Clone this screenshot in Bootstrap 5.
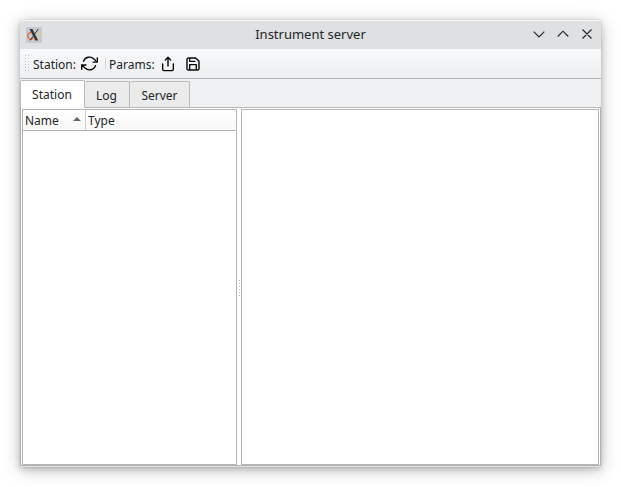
<!DOCTYPE html>
<html lang="en">
<head>
<meta charset="utf-8">
<title>Instrument server</title>
<link href="https://cdn.jsdelivr.net/npm/bootstrap@5.3.0/dist/css/bootstrap.min.css" rel="stylesheet">
<style>
body{font:12px/16px "Noto Sans",sans-serif;color:#232629;background:#fff;height:487px;padding:20px;overflow:hidden}
svg{display:block;flex:none}
.app-window{width:581px;height:447px;background:#e2e3e4;border-radius:2px 2px 0 0;box-shadow:0 0 1px rgba(0,0,0,.3),0 2px 6px rgba(0,0,0,.2),0 3px 18px rgba(0,0,0,.22)}
.titlebar{height:29px;background:#dee0e2;border-top:1px solid #f4f5f5;border-radius:2px 2px 0 0;padding:0 8px 1px 6px}
.caption{font-size:13px;line-height:17px;padding-left:2px}
.side-slot{width:68px}
.window-buttons{padding-bottom:2px}
.tools{height:30px;background:linear-gradient(#f8f9fb,#eeeff1);border-bottom:1px solid #b3b5b6;padding-left:5px}
.tools .label{padding-top:2px}
.grip{width:5px;height:17px;margin-right:3px;background:radial-gradient(circle at .5px .5px,#bdbfc1 .7px,transparent .8px) 0 0/3px 3px}
.tool-sep{width:1px;height:12px;background:#d3d5d6;margin:0 3px 0 7px}
.refresh{margin-left:5px}
.share{margin-left:5px}
.save{margin-left:9px}
.tabs{height:29px;background:#eff0f1;border-bottom:1px solid #b5b7b8}
.tab{height:26px;background:#ebebeb;border:1px solid #b9bbbc;border-left-width:0;border-bottom:0;border-radius:2px 2px 0 0;padding-top:2px}
.tab.current{height:28px;width:65px;background:#fff;border-left-width:1px;margin-bottom:-1px;padding:1px 1px 0 0}
.tab-log{width:45px;padding-right:1px}
.tab-server{width:60px}
.pane{height:358px;background:#fff;border:1px solid #b0b2b3;border-top:0;padding:1px 1px 0 1px}
.frame{border:1px solid #b4b6b6;background:#fff}
.tree{width:215px}
.tree-head{height:21px;background:linear-gradient(#fff,#f8f8f8);border-bottom:1px solid #b0b2b3}
.tree-head span{padding-top:2px}
.col-name{width:63px;border-right:1px solid #ccc;padding:0 4px 0 2px}
.col-name svg{margin-bottom:2px}
.col-type{padding-left:2px}
.splitter{width:4px;padding-top:2px}
.splitter i{width:1px;height:17px;margin-left:2px;background:repeating-linear-gradient(#b4b6b7 0 1px,transparent 1px 3px)}
</style>
<script src="https://cdn.jsdelivr.net/npm/bootstrap@5.3.0/dist/js/bootstrap.bundle.min.js"></script>
</head>
<body>
<main class="app-window d-flex flex-column">
  <header class="titlebar d-flex align-items-center justify-content-between">
    <div class="side-slot">
      <svg width="16" height="16" viewBox="0 0 16 16"><path fill="#c4cbd0" d="M0 0h16v16H0z"/><path d="M9 5.300c3.800-1.300 6.200.7 5.300 3.500-.6 1.900-2.300 3-4.300 2.900" fill="none" stroke="#e6c49d" stroke-width="1.300"/><path d="M5.500 4.900C1.200 6 .7 10 3 11.700c1.700 1 3.500.5 4.500-.7" fill="none" stroke="#e57042" stroke-width="1.500"/><path d="M3.500 2h3l5.700 11.500H9.400z" fill="#30363a"/><path d="M12.300 2 4 13.500" stroke="#30363a"/></svg>
    </div>
    <span class="caption">Instrument server</span>
    <div class="side-slot window-buttons d-flex justify-content-end">
      <svg width="60" height="14" viewBox="0 0 60 14" fill="none" stroke="#232629" stroke-width="1.150"><path d="m.7 4.700 5.300 5.300 5.300-5.300M24.700 9.500l5.300-5.300 5.300 5.300M49.500 2.500l9 9m0-9-9 9"/></svg>
    </div>
  </header>
  <div class="tools d-flex align-items-center">
    <span class="grip"></span><span class="label">Station:</span>
    <svg class="refresh" width="17" height="17" viewBox="0 0 24 24" fill="none" stroke="#090909" stroke-width="2" stroke-linecap="round" stroke-linejoin="round"><path d="M23 4v6h-6M1 20v-6h6M3.510 9a9 9 0 0 1 14.850-3.360L23 10M1 14l4.640 4.360A9 9 0 0 0 20.490 15"/></svg>
    <span class="tool-sep"></span><span class="label">Params:</span>
    <svg class="share" width="16" height="16" viewBox="0 0 24 24" fill="none" stroke="#090909" stroke-width="2.100" stroke-linecap="round" stroke-linejoin="round"><path d="M4 12v8a2 2 0 0 0 2 2h12a2 2 0 0 0 2-2v-8M16 6l-4-4-4 4M12 2v13"/></svg>
    <svg class="save" width="16" height="16" viewBox="0 0 24 24" fill="none" stroke="#090909" stroke-width="2.100" stroke-linecap="round" stroke-linejoin="round"><path d="M19 21H5a2 2 0 0 1-2-2V5a2 2 0 0 1 2-2h11l5 5v11a2 2 0 0 1-2 2zM17 21v-8H7v8M7 3v5h8"/></svg>
  </div>
  <nav class="tabs d-flex align-items-end">
    <div class="tab current d-flex align-items-center justify-content-center">Station</div>
    <div class="tab tab-log d-flex align-items-center justify-content-center">Log</div>
    <div class="tab tab-server d-flex align-items-center justify-content-center">Server</div>
  </nav>
  <section class="pane d-flex">
    <div class="frame tree">
      <div class="tree-head d-flex align-items-center">
        <div class="col-name h-100 d-flex align-items-center justify-content-between"><span>Name</span><svg width="8" height="4" viewBox="0 0 8 4"><path d="M0 4 4 0l4 4z" fill="#626567"/></svg></div>
        <span class="col-type">Type</span>
      </div>
    </div>
    <div class="splitter d-flex align-items-center"><i></i></div>
    <div class="frame flex-grow-1"></div>
  </section>
</main>
</body>
</html>
